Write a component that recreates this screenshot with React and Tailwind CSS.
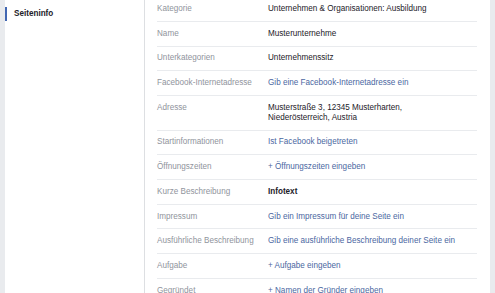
import React from "react";

const rows = [
  { label: "Kategorie", value: "Unternehmen & Organisationen: Ausbildung" },
  { label: "Name", value: "Musterunternehme" },
  { label: "Unterkategorien", value: "Unternehmenssitz" },
  { label: "Facebook-Internetadresse", value: "Gib eine Facebook-Internetadresse ein", link: true },
  {
    label: "Adresse",
    value: ["Musterstraße 3, 12345 Musterharten,", "Niederösterreich, Austria"],
  },
  { label: "Startinformationen", value: "Ist Facebook beigetreten", link: true },
  { label: "Öffnungszeiten", value: "+ Öffnungszeiten eingeben", link: true },
  { label: "Kurze Beschreibung", value: "Infotext", bold: true },
  { label: "Impressum", value: "Gib ein Impressum für deine Seite ein", link: true },
  { label: "Ausführliche Beschreibung", value: "Gib eine ausführliche Beschreibung deiner Seite ein", link: true },
  { label: "Aufgabe", value: "+ Aufgabe eingeben", link: true },
  { label: "Gegründet", value: "+ Namen der Gründer eingeben", link: true },
];

function InfoRow({ row, first }) {
  const valueClass = row.link
    ? "text-[#4b67a1]"
    : row.bold
    ? "text-[#1d2129] font-bold"
    : "text-[#1d2129]";

  return (
    <div
      className={
        "flex border-b border-[#e9ebee] pb-[6.85px] " +
        (first ? "pt-[4px]" : "pt-[6.85px]")
      }
    >
      <div className="w-[111px] shrink-0 text-[#90949c]">{row.label}</div>
      <div className={valueClass}>
        {Array.isArray(row.value)
          ? row.value.map((line) => <div key={line}>{line}</div>)
          : row.value}
      </div>
    </div>
  );
}

export default function App() {
  return (
    <div
      className="flex h-[293px] w-[495px] overflow-hidden bg-[#e9ebee] text-[8.15px] leading-[10px]"
      style={{ fontFamily: '"Liberation Sans", Arial, sans-serif' }}
    >
      <div className="w-[5px] shrink-0" />

      {/* left nav */}
      <div className="w-[139px] shrink-0 bg-white pt-[7px]">
        <div className="flex items-center border-l-2 border-[#4267b2] h-[13.5px] pl-[7px] font-bold text-[#1d2129]">
          Seiteninfo
        </div>
      </div>

      {/* content */}
      <div className="w-[346px] shrink-0 border-l border-[#dddfe2] bg-white pl-[12px] pr-[13px]">
        {rows.map((row, i) => (
          <InfoRow key={row.label} row={row} first={i === 0} />
        ))}
      </div>
    </div>
  );
}
